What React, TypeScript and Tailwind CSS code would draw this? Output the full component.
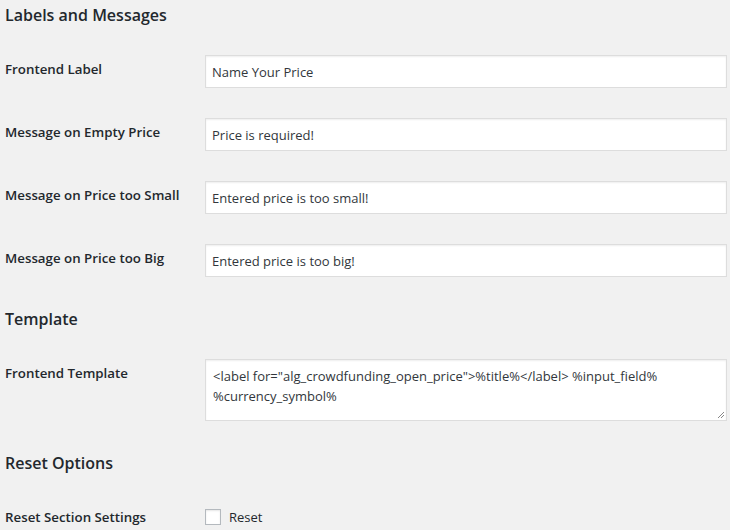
import React from "react";

const font = { fontFamily: '"Open Sans", "Noto Sans", sans-serif' };

function Heading({ children, first }: { children: React.ReactNode; first?: boolean }) {
  return (
    <h2
      className={`${first ? "pt-[3px]" : "pt-[15px]"} pb-[13px] text-[16px] leading-[24px] font-semibold text-[#23282d]`}
    >
      {children}
    </h2>
  );
}

function Row({ label, children }: { label: string; children: React.ReactNode }) {
  return (
    <div className="flex">
      <div className="w-[200px] shrink-0 pt-[20px] text-[13.3px] leading-[18px] font-semibold text-[#23282d]">
        {label}
      </div>
      <div className="flex-1 py-[15px]">{children}</div>
    </div>
  );
}

function TextInput({ value }: { value: string }) {
  return (
    <div className="h-[33px] w-full border border-[#dddddd] bg-white px-[6px] pt-[1px] text-[13px] leading-[31px] text-[#32373c] shadow-[inset_0_1px_2px_rgba(0,0,0,0.07)]">
      {value}
    </div>
  );
}

export default function App() {
  return (
    <div style={font} className="min-h-[530px] w-[730px] bg-[#f1f1f1] pl-[5px] pr-[3px]">
      <Heading first>Labels and Messages</Heading>
      <Row label="Frontend Label">
        <TextInput value="Name Your Price" />
      </Row>
      <Row label="Message on Empty Price">
        <TextInput value="Price is required!" />
      </Row>
      <Row label="Message on Price too Small">
        <TextInput value="Entered price is too small!" />
      </Row>
      <Row label="Message on Price too Big">
        <TextInput value="Entered price is too big!" />
      </Row>

      <Heading>Template</Heading>
      <Row label="Frontend Template">
        <div className="relative h-[62px] w-full border border-[#dddddd] bg-white px-[7px] pt-[6px] text-[13px] leading-[20px] text-[#32373c] shadow-[inset_0_1px_2px_rgba(0,0,0,0.07)]">
          {'<label for="alg_crowdfunding_open_price">%title%</label> %input_field%'}
          <br />
          %currency_symbol%
          <svg className="absolute bottom-[1px] right-[1px]" width="8" height="8" viewBox="0 0 8 8">
            <line x1="1" y1="7" x2="7" y2="1" stroke="#888" strokeWidth="1" />
            <line x1="4" y1="7" x2="7" y2="4" stroke="#888" strokeWidth="1" />
          </svg>
        </div>
      </Row>

      <Heading>Reset Options</Heading>
      <div className="flex">
        <div className="w-[200px] shrink-0 pt-[20px] text-[13.3px] leading-[18px] font-semibold text-[#23282d]">
          Reset Section Settings
        </div>
        <div className="flex items-center pt-[20px]">
          <div className="h-[16px] w-[16px] border border-[#b4b9be] bg-white shadow-[inset_0_1px_2px_rgba(0,0,0,0.1)]" />
          <span className="ml-[8px] text-[13px] leading-[16px] text-[#23282d]">Reset</span>
        </div>
      </div>
    </div>
  );
}
